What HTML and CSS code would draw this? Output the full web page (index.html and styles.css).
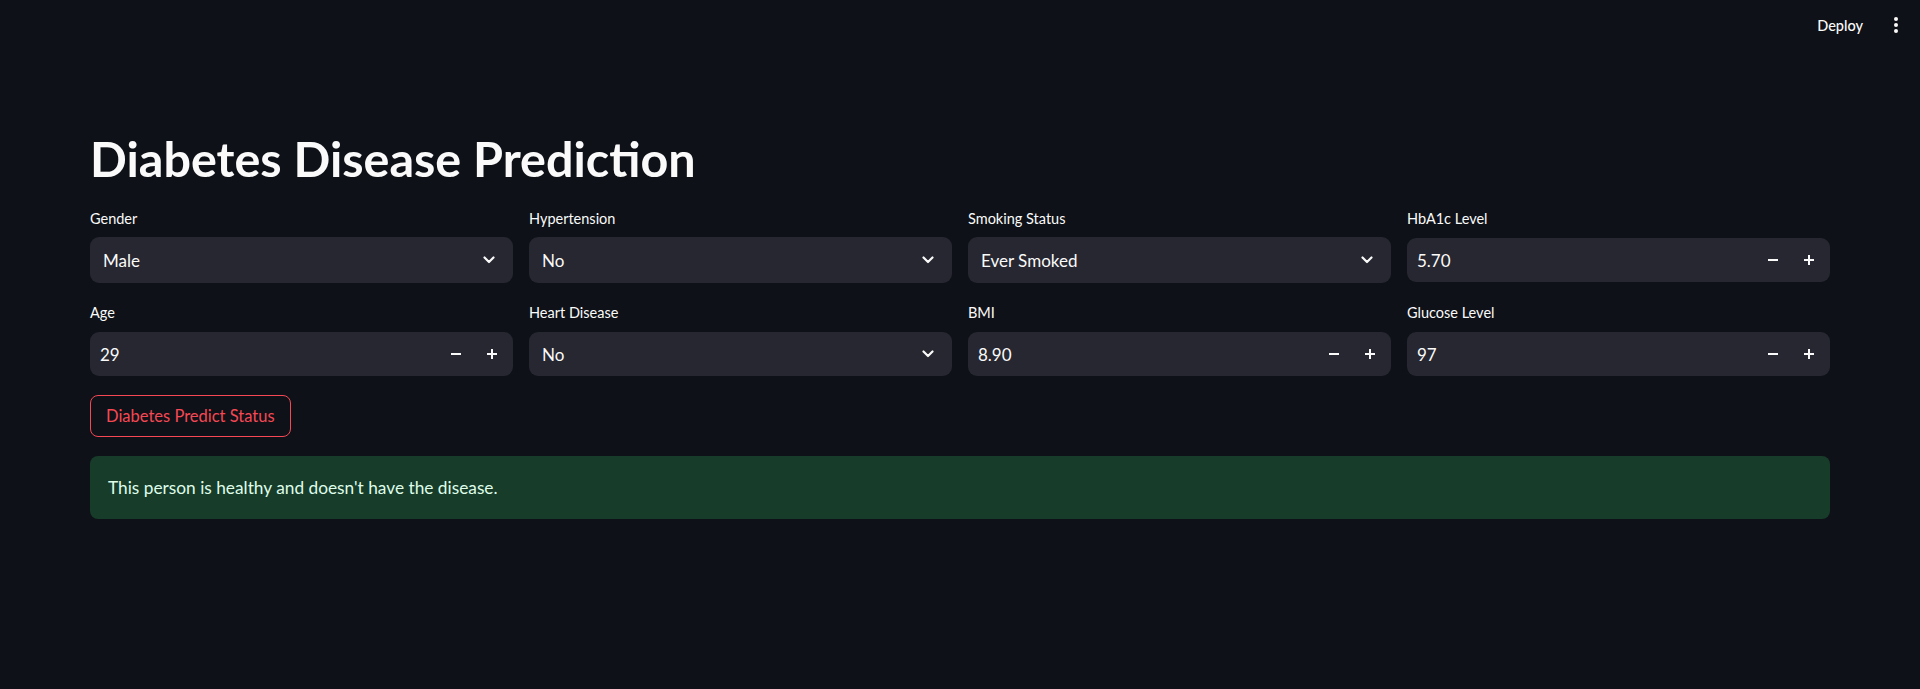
FILE: index.html
```html
<!DOCTYPE html>
<html lang="en">
<head>
<meta charset="utf-8">
<title>Diabetes Disease Prediction</title>
<link rel="stylesheet" href="styles.css">
</head>
<body>
<header class="topbar">
  <span class="deploy">Deploy</span>
  <span class="menu">
    <svg width="6" height="18" viewBox="0 0 6 18"><circle cx="3" cy="3" r="2" fill="#fafafa"/><circle cx="3" cy="9" r="2" fill="#fafafa"/><circle cx="3" cy="15" r="2" fill="#fafafa"/></svg>
  </span>
</header>
<main class="main">
  <h1 class="title">Diabetes Disease Prediction</h1>
  <div class="grid">
    <div class="col">
      <div class="field">
        <div class="label">Gender</div>
        <div class="control select"><span class="value">Male</span><svg class="chev" width="12" height="8" viewBox="0 0 12 8"><path d="M1.5 1.5 L6 6 L10.5 1.5" fill="none" stroke="#fafafa" stroke-width="2.2" stroke-linecap="round" stroke-linejoin="round"/></svg></div>
      </div>
      <div class="field">
        <div class="label">Age</div>
        <div class="control number"><span class="value">29</span><span class="step"><svg width="10" height="10" viewBox="0 0 10 10"><path d="M0 5 H10" stroke="#fafafa" stroke-width="2"/></svg></span><span class="step"><svg width="10" height="10" viewBox="0 0 10 10"><path d="M0 5 H10 M5 0 V10" stroke="#fafafa" stroke-width="2"/></svg></span></div>
      </div>
    </div>
    <div class="col">
      <div class="field">
        <div class="label">Hypertension</div>
        <div class="control select"><span class="value">No</span><svg class="chev" width="12" height="8" viewBox="0 0 12 8"><path d="M1.5 1.5 L6 6 L10.5 1.5" fill="none" stroke="#fafafa" stroke-width="2.2" stroke-linecap="round" stroke-linejoin="round"/></svg></div>
      </div>
      <div class="field">
        <div class="label">Heart Disease</div>
        <div class="control select"><span class="value">No</span><svg class="chev" width="12" height="8" viewBox="0 0 12 8"><path d="M1.5 1.5 L6 6 L10.5 1.5" fill="none" stroke="#fafafa" stroke-width="2.2" stroke-linecap="round" stroke-linejoin="round"/></svg></div>
      </div>
    </div>
    <div class="col">
      <div class="field">
        <div class="label">Smoking Status</div>
        <div class="control select"><span class="value">Ever Smoked</span><svg class="chev" width="12" height="8" viewBox="0 0 12 8"><path d="M1.5 1.5 L6 6 L10.5 1.5" fill="none" stroke="#fafafa" stroke-width="2.2" stroke-linecap="round" stroke-linejoin="round"/></svg></div>
      </div>
      <div class="field">
        <div class="label">BMI</div>
        <div class="control number"><span class="value">8.90</span><span class="step"><svg width="10" height="10" viewBox="0 0 10 10"><path d="M0 5 H10" stroke="#fafafa" stroke-width="2"/></svg></span><span class="step"><svg width="10" height="10" viewBox="0 0 10 10"><path d="M0 5 H10 M5 0 V10" stroke="#fafafa" stroke-width="2"/></svg></span></div>
      </div>
    </div>
    <div class="col">
      <div class="field">
        <div class="label">HbA1c Level</div>
        <div class="control number"><span class="value">5.70</span><span class="step"><svg width="10" height="10" viewBox="0 0 10 10"><path d="M0 5 H10" stroke="#fafafa" stroke-width="2"/></svg></span><span class="step"><svg width="10" height="10" viewBox="0 0 10 10"><path d="M0 5 H10 M5 0 V10" stroke="#fafafa" stroke-width="2"/></svg></span></div>
      </div>
      <div class="field">
        <div class="label">Glucose Level</div>
        <div class="control number"><span class="value">97</span><span class="step"><svg width="10" height="10" viewBox="0 0 10 10"><path d="M0 5 H10" stroke="#fafafa" stroke-width="2"/></svg></span><span class="step"><svg width="10" height="10" viewBox="0 0 10 10"><path d="M0 5 H10 M5 0 V10" stroke="#fafafa" stroke-width="2"/></svg></span></div>
      </div>
    </div>
  </div>
  <button class="btn" type="button">Diabetes Predict Status</button>
  <div class="alert">This person is healthy and doesn't have the disease.</div>
</main>
</body>
</html>
```

FILE: styles.css
```css
* { box-sizing: border-box; }
html, body { margin: 0; padding: 0; }
body {
  background: #0e1117;
  color: #fafafa;
  font-family: Lato, "Noto Sans", sans-serif;
  height: 689px;
  overflow: hidden;
}
.topbar {
  height: 50px;
  display: flex;
  align-items: center;
  justify-content: flex-end;
  padding-right: 21px;
  gap: 30px;
}
.deploy {
  font-size: 14.5px;
  font-weight: 500;
  color: #fafafa;
}
.menu { display: flex; align-items: center; }
.main {
  padding: 0 90px;
}
.title {
  margin: 82px 0 0 0;
  font-size: 48.5px;
  line-height: 53px;
  font-weight: 700;
  letter-spacing: 0;
  color: #fafafa;
}
.grid {
  margin-top: 24px;
  display: grid;
  grid-template-columns: repeat(4, 1fr);
  column-gap: 16px;
}
.col {
  display: flex;
  flex-direction: column;
  gap: 20px;
}
.field {
  display: flex;
  flex-direction: column;
  height: 74px;
}
.label {
  font-size: 14.5px;
  line-height: 20px;
  margin-bottom: 8px;
  color: #fafafa;
}
.control {
  background: #262730;
  border-radius: 9px;
  display: flex;
  align-items: center;
  font-size: 17px;
  color: #fafafa;
}
.select {
  height: 46px;
  padding: 0 18px 0 13px;
}
.number {
  height: 44px;
  margin-top: 1px;
  padding-left: 10px;
  padding-right: 3px;
}
.field + .field .select {
  height: 44px;
  margin-top: 1px;
}
.value { flex: 1; }
.step {
  width: 36px;
  height: 100%;
  display: flex;
  align-items: center;
  justify-content: center;
}
.btn {
  margin-top: 18px;
  height: 42px;
  padding: 0 15px;
  background: transparent;
  border: 1px solid #f54854;
  border-radius: 8px;
  color: #f54854;
  font-family: Lato, "Noto Sans", sans-serif;
  font-size: 16.5px;
  display: block;
}
.alert {
  margin-top: 19px;
  height: 63px;
  background: #183c2a;
  border-radius: 8px;
  padding: 0 18px;
  display: flex;
  align-items: center;
  color: #dffde9;
  font-size: 17.3px;
}
```
